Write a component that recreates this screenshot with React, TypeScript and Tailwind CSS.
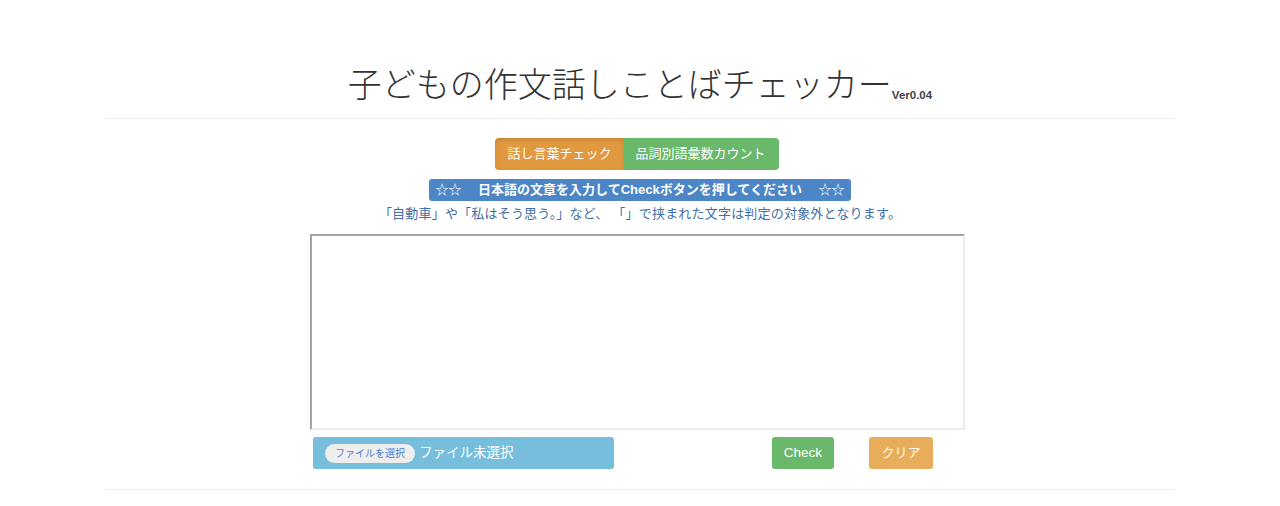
import React from "react";

export default function App() {
  const font = { fontFamily: '"Liberation Sans", "Noto Sans CJK JP", sans-serif' };
  return (
    <div className="w-[1280px] h-[506px] bg-white text-[#333]" style={font}>
      <div className="mx-auto w-[1068px] pt-[58px]">
        <h1 className="flex items-end justify-center h-[42px] leading-none">
          <span className="text-[34px] font-light text-[#333] tracking-[0px]" style={{ fontFamily: '"Noto Sans CJK JP", sans-serif' }}>
            子どもの作文話しことばチェッカー
          </span>
          <span className="text-[11.5px] font-bold text-[#444] mb-[-1px] ml-[0px]">Ver0.04</span>
        </h1>
        <div className="mt-[18px] h-px bg-[#eeeeee]" />

        <div className="flex flex-col items-center">
          <div className="mt-[19px] flex h-[32px] ml-[-6px]">
            <button className="h-[32px] px-[12px] text-[13px] text-white bg-[#e0993f] rounded-l-[4px] shadow-[inset_0_2px_4px_rgba(0,0,0,0.12)]">
              話し言葉チェック
            </button>
            <button className="h-[32px] pl-[12px] pr-[13px] text-[13px] text-white bg-[#6ab869] rounded-r-[4px]">
              品詞別語彙数カウント
            </button>
          </div>

          <div className="mt-[9px] h-[22px] w-[422px] flex items-center justify-center rounded-[3px] bg-[#4c86c6] text-white text-[13px] font-bold whitespace-pre">
            <span className="font-normal">☆☆</span>
            {"　 日本語の文章を入力してCheckボタンを押してください　 "}
            <span className="font-normal">☆☆</span>
          </div>

          <p className="mt-[4px] text-[13px] leading-[18px] text-[#3f6fa6] tracking-[0.2px]">
            「自動車」や「私はそう思う。」など、 「」で挟まれた文字は判定の対象外となります。
          </p>
        </div>

        <div className="ml-[204px] mt-[11px]">
          <textarea className="block w-[655px] h-[196px] resize-none border-2 border-t-[#a3a3a3] border-l-[#a3a3a3] border-b-[#ececec] border-r-[#ececec] outline-none" />
          <div className="mt-[7px] flex items-center">
            <div className="ml-[3px] w-[301px] h-[32px] rounded-[3px] bg-[#76bedc] flex items-center">
              <span className="ml-[12px] h-[19px] w-[90px] rounded-full bg-[#eeeeee] flex items-center justify-center text-[10px] text-[#4a7fd6]">
                ファイルを選択
              </span>
              <span className="ml-[4px] text-[13.5px] text-white">ファイル未選択</span>
            </div>
            <button className="ml-[158px] h-[32px] w-[62px] rounded-[3px] bg-[#6ab869] text-white text-[13.5px]">
              Check
            </button>
            <button className="ml-[35px] h-[32px] w-[64px] rounded-[3px] bg-[#e8ad5a] text-white text-[13px]">
              クリア
            </button>
          </div>
        </div>

        <div className="mt-[20px] h-px bg-[#eeeeee]" />
      </div>
    </div>
  );
}
